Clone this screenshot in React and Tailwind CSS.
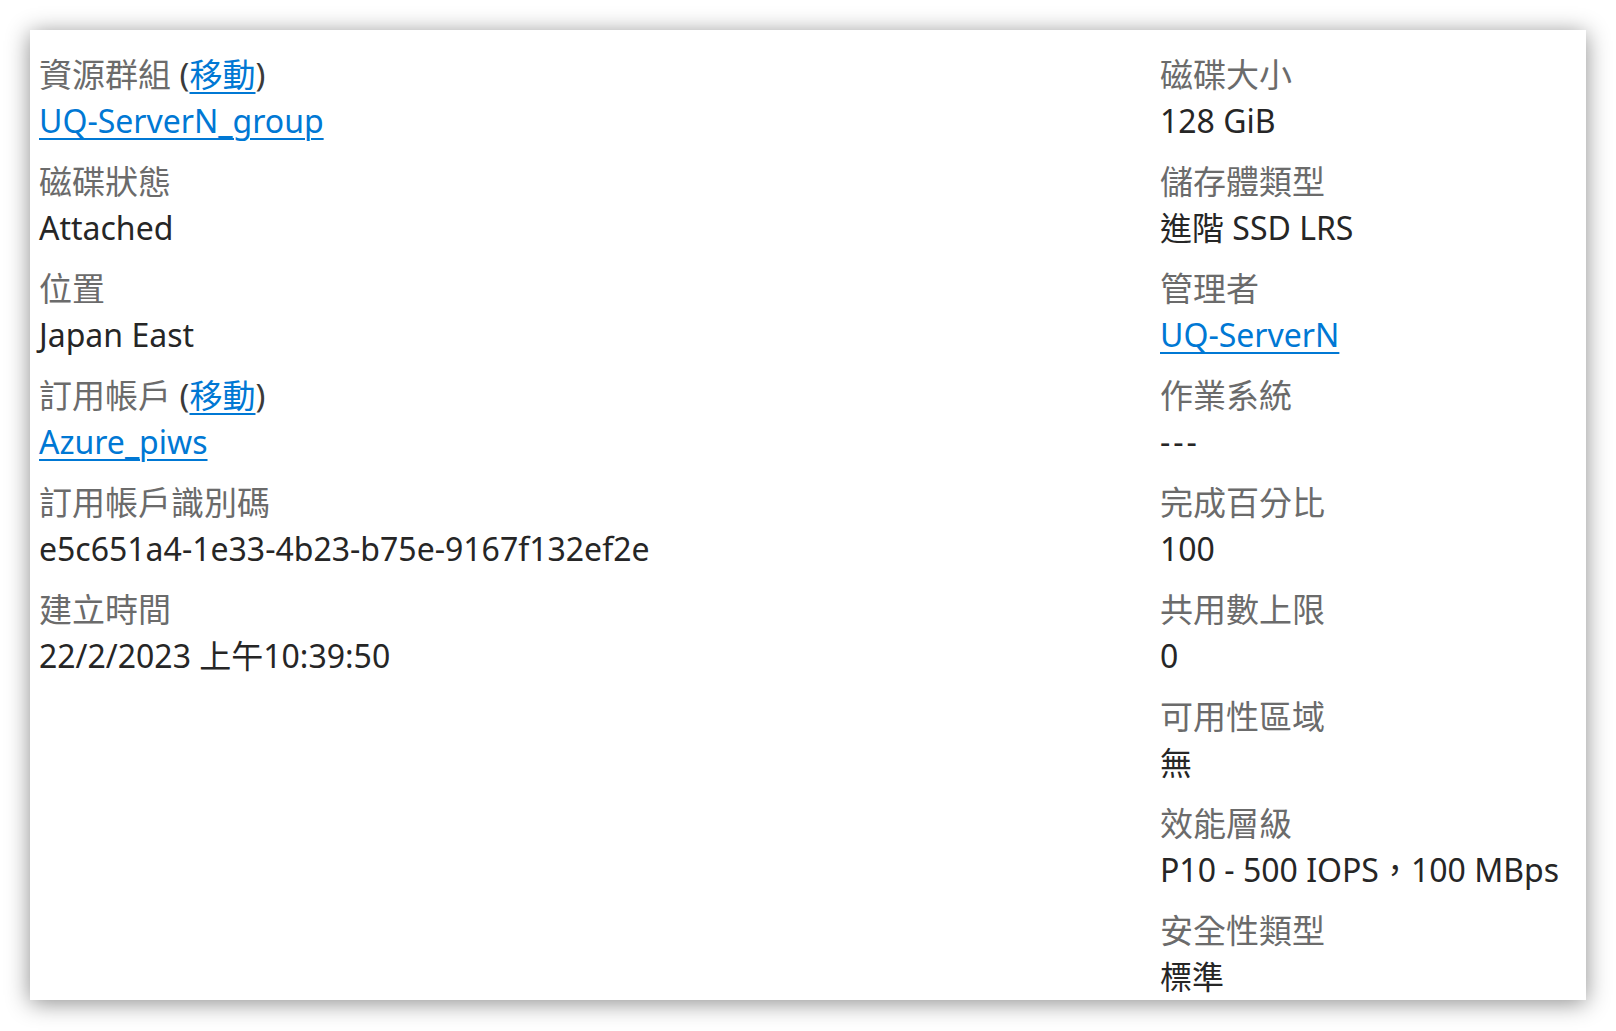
import React from 'react';

const Link = ({ children }) => (
  <a href="#" className="text-[#0078d4] underline decoration-[1.5px] underline-offset-[5px]">{children}</a>
);

const Field = ({ label, children }) => (
  <div className="flex flex-col">
    <div className="text-[#6b6b6b] text-[33px] leading-[46px]">{label}</div>
    <div className="text-[#262626] leading-[46px] whitespace-nowrap">{children}</div>
  </div>
);

const Move = ({ children }) => (
  <>
    {children} <span className="text-[#3a3a3a]">(</span>
    <Link>移動</Link>
    <span className="text-[#3a3a3a]">)</span>
  </>
);

const left = [
  { label: <Move>資源群組</Move>, value: <Link>UQ-ServerN_group</Link> },
  { label: '磁碟狀態', value: 'Attached' },
  { label: '位置', value: 'Japan East' },
  { label: <Move>訂用帳戶</Move>, value: <Link>Azure_piws</Link> },
  { label: '訂用帳戶識別碼', value: 'e5c651a4-1e33-4b23-b75e-9167f132ef2e' },
  { label: '建立時間', value: '22/2/2023 上午10:39:50' },
];

const right = [
  { label: '磁碟大小', value: '128 GiB' },
  { label: '儲存體類型', value: '進階 SSD LRS' },
  { label: '管理者', value: <Link>UQ-ServerN</Link> },
  { label: '作業系統', value: <span className="tracking-[3px]">---</span> },
  { label: '完成百分比', value: '100' },
  { label: '共用數上限', value: '0' },
  { label: '可用性區域', value: '無' },
  { label: '效能層級', value: 'P10 - 500 IOPS，100 MBps' },
  { label: '安全性類型', value: '標準' },
];

export default function App() {
  return (
    <div className="w-[1616px] h-[1031px] bg-white pt-[30px] pl-[30px]">
      <div
        className="w-[1556px] h-[970px] bg-white overflow-hidden shadow-[0_3px_22px_rgba(0,0,0,0.45)] pt-[22px] pl-[9px] grid grid-cols-[1121px_1fr] text-[32px]"
        style={{ fontFamily: '"Noto Sans", "Noto Sans CJK TC", sans-serif' }}
      >
        {/* left column */}
        <div className="flex flex-col gap-[15px]">
          {left.map((f, i) => (
            <Field key={i} label={f.label}>{f.value}</Field>
          ))}
        </div>

        {/* right column */}
        <div className="flex flex-col gap-[15px]">
          {right.map((f, i) => (
            <Field key={i} label={f.label}>{f.value}</Field>
          ))}
        </div>
      </div>
    </div>
  );
}
